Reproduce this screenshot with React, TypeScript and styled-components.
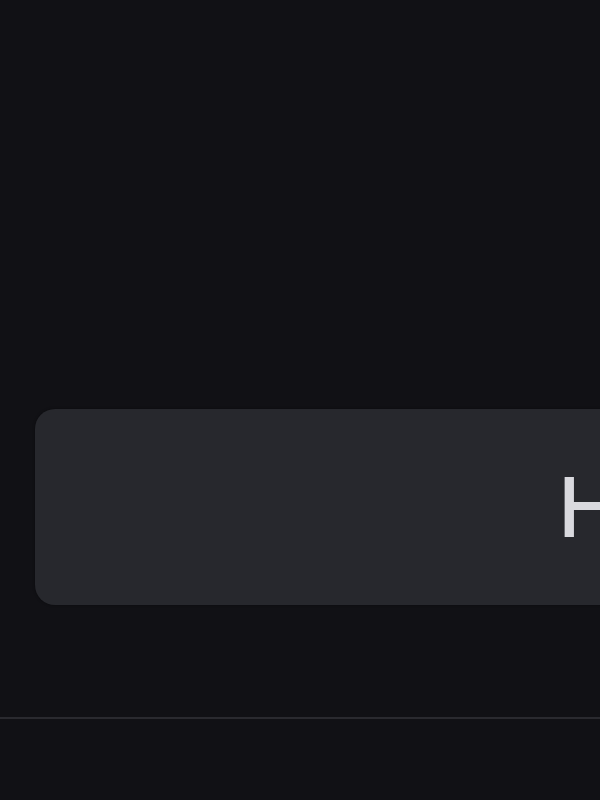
import React from "react";
import styled, { createGlobalStyle } from "styled-components";

const GlobalStyle = createGlobalStyle`
  html, body {
    margin: 0;
    padding: 0;
    background: #111115;
    overflow: hidden;
  }
  #root {
    width: 600px;
    height: 800px;
  }
`;

const Screen = styled.div`
  display: flex;
  flex-direction: column;
  width: 600px;
  height: 800px;
  overflow: hidden;
  background: #111115;
  font-family: Inter, "Noto Sans", sans-serif;
`;

const Stage = styled.div`
  display: flex;
  flex-direction: column;
  justify-content: flex-end;
  height: 605px;
  padding-left: 35px;
`;

const Field = styled.div`
  display: flex;
  align-items: center;
  flex-shrink: 0;
  width: 760px;
  height: 196px;
  padding-left: 523px;
  box-sizing: border-box;
  background: #27282d;
  border-radius: 20px;
  box-shadow: 0 0 3px rgba(0, 0, 0, 0.4);
`;

const FieldText = styled.span`
  color: #d9d9de;
  font-size: 83px;
  font-weight: 500;
  line-height: 1;
  white-space: nowrap;
`;

const Divider = styled.div`
  margin-top: 112px;
  height: 2px;
  background: #2a2a2f;
`;

export default function App() {
  return (
    <>
      <GlobalStyle />
      <Screen>
        <Stage>
          <Field>
            <FieldText>Hello</FieldText>
          </Field>
        </Stage>
        <Divider />
      </Screen>
    </>
  );
}
